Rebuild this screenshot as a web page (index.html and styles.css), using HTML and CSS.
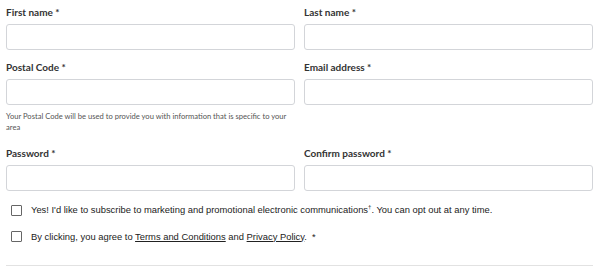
FILE: index.html
```html
<!DOCTYPE html>
<html lang="en">
<head>
  <meta charset="UTF-8">
  <meta name="viewport" content="width=device-width, initial-scale=1.0">
  <title>Create account</title>
  <link rel="stylesheet" href="styles.css">
</head>
<body>
  <form class="signup-form">
    <div class="field-grid">
      <div class="field">
        <label class="field-label" for="first-name">First name *</label>
        <input type="text" id="first-name" class="input-field">
      </div>
      <div class="field">
        <label class="field-label" for="last-name">Last name *</label>
        <input type="text" id="last-name" class="input-field">
      </div>
      <div class="field">
        <label class="field-label" for="postal-code">Postal Code *</label>
        <input type="text" id="postal-code" class="input-field">
        <p class="help-text">Your Postal Code will be used to provide you with information that is specific to your area</p>
      </div>
      <div class="field">
        <label class="field-label" for="email">Email address *</label>
        <input type="email" id="email" class="input-field">
      </div>
      <div class="field">
        <label class="field-label" for="password">Password *</label>
        <input type="password" id="password" class="input-field">
      </div>
      <div class="field">
        <label class="field-label" for="confirm-password">Confirm password *</label>
        <input type="password" id="confirm-password" class="input-field">
      </div>
    </div>

    <div class="checks">
      <label class="check-row">
        <input type="checkbox" class="check-box">
        <span>Yes! I'd like to subscribe to marketing and promotional electronic communications<sup>†</sup>. You can opt out at any time.</span>
      </label>
      <label class="check-row">
        <input type="checkbox" class="check-box">
        <span>By clicking, you agree to <a href="#">Terms and Conditions</a> and <a href="#">Privacy Policy</a>. &nbsp;*</span>
      </label>
    </div>

    <hr class="divider">
  </form>
</body>
</html>
```

FILE: styles.css
```css
/* Sign up form */
:root {
  --text-color: #333333;
  --muted-color: #555555;
  --border-color: #d3d5d9;
}

body {
  margin: 0;
  padding: 0;
  background-color: #fff;
  color: var(--text-color);
  font-family: 'Lato', sans-serif;
}

.signup-form {
  padding: 4px 7px 0 6px;
}

.field-grid {
  display: grid;
  grid-template-columns: 1fr 1fr;
  column-gap: 9px;
  align-items: start;
}

.field {
  display: flex;
  flex-direction: column;
  margin-bottom: 9px;
}

.field-label {
  font-size: 10px;
  font-weight: bold;
  line-height: 16px;
  margin-bottom: 4px;
  color: var(--text-color);
}

.input-field {
  box-sizing: border-box;
  width: 100%;
  height: 26px;
  margin: 0;
  padding: 4px 8px;
  border: 1px solid var(--border-color);
  border-radius: 3px;
  background-color: #fff;
  font-size: 12px;
}

.help-text {
  margin: 6px 0 3px 0;
  font-size: 7.6px;
  line-height: 11px;
  color: var(--muted-color);
}

.checks {
  margin-top: 2px;
  font-family: 'Liberation Sans', Arial, sans-serif;
  font-size: 9.4px;
  color: #222;
}

.check-row {
  display: flex;
  align-items: center;
  gap: 9px;
  height: 16px;
  margin-bottom: 10px;
  padding-left: 5px;
}

.check-box {
  appearance: none;
  box-sizing: border-box;
  width: 11px;
  height: 11px;
  margin: 0;
  border: 1px solid #666;
  border-radius: 1px;
  background-color: #fff;
  flex-shrink: 0;
}

.check-row sup {
  font-size: 6px;
}

.check-row a {
  color: #222;
  text-decoration: underline;
}

.divider {
  margin: 21px 0 0 0;
  border: none;
  border-top: 1px solid #e2e2e2;
}
```
